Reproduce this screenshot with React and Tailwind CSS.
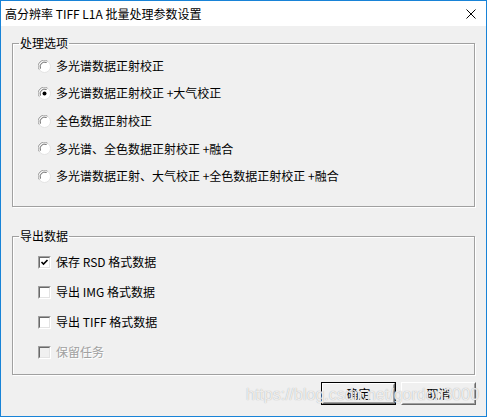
import React from 'react';

const font = { fontFamily: '"Noto Sans CJK SC", "Noto Sans", sans-serif' };

function Radio({ checked }) {
  return (
    <svg width="13" height="13" viewBox="0 0 13 13" className="shrink-0">
      <circle cx="6.5" cy="6.5" r="6" fill="#fff" stroke="#e3e3e3" />
      <path d="M1.2 9.5 A6 6 0 0 1 9.5 1.2" fill="none" stroke="#a0a0a0" strokeWidth="1" />
      <path d="M2.5 8.6 A4.6 4.6 0 0 1 8.6 2.5" fill="none" stroke="#696969" strokeWidth="1" />
      {checked && <circle cx="6.5" cy="6.5" r="2" fill="#000" />}
    </svg>
  );
}

function Checkbox({ checked, disabled }) {
  return (
    <div className="w-[13px] h-[13px] shrink-0 border border-t-[#a0a0a0] border-l-[#a0a0a0] border-r-white border-b-white">
      <div className={`w-full h-full border border-t-[#696969] border-l-[#696969] border-r-[#e3e3e3] border-b-[#e3e3e3] ${disabled ? 'bg-[#f0f0f0]' : 'bg-white'}`}>
        {checked && (
          <svg width="9" height="9" viewBox="0 0 9 9" className="block">
            <path d="M1.5 4 L3.5 6 L7.5 2" fill="none" stroke="#000" strokeWidth="1.6" />
          </svg>
        )}
      </div>
    </div>
  );
}

function Button({ children, isDefault }) {
  return (
    <div className={`w-[75px] h-[23px] ${isDefault ? 'border border-[#000]' : ''}`}>
      <div className="w-full h-full border border-t-white border-l-white border-r-[#696969] border-b-[#696969] bg-[#f0f0f0]">
        <div className="w-full h-full border border-transparent border-r-[#a0a0a0] border-b-[#a0a0a0] flex items-center justify-center text-[12px] text-black">
          {children}
        </div>
      </div>
    </div>
  );
}

export default function App() {
  const radios = [
    { label: '多光谱数据正射校正', checked: false, h: 'h-[26px]' },
    { label: '多光谱数据正射校正 +大气校正', checked: true, h: 'h-[28px]' },
    { label: '全色数据正射校正', checked: false, h: 'h-[28px]' },
    { label: '多光谱、全色数据正射校正 +融合', checked: false, h: 'h-[27px]' },
    { label: '多光谱数据正射、大气校正 +全色数据正射校正 +融合', checked: false, h: 'h-[28px]' },
  ];

  const checks = [
    { label: '保存 RSD 格式数据', checked: true },
    { label: '导出 IMG 格式数据', checked: false },
    { label: '导出 TIFF 格式数据', checked: false },
    { label: '保留任务', checked: false, disabled: true },
  ];

  return (
    <div className="relative w-[487px] h-[417px] border border-[#1883d7] bg-[#f0f0f0] flex flex-col text-black" style={font}>
      {/* 标题栏 */}
      <div className="h-[25px] bg-white flex items-center justify-between pl-[4px] pr-[10px] text-[12px] shrink-0">
        <span>高分辨率 TIFF L1A 批量处理参数设置</span>
        <svg width="10" height="10" viewBox="0 0 10 10">
          <path d="M0.5 0.5 L9.5 9.5 M9.5 0.5 L0.5 9.5" stroke="#000" strokeWidth="1" />
        </svg>
      </div>

      <div className="flex flex-col px-[11px] pt-[9px]">
        {/* 处理选项 */}
        <fieldset className="h-[172px] border border-[#a0a0a0] shadow-[1px_1px_0_#fff,inset_1px_1px_0_#fff] pl-[6px] pt-[2px]">
          <legend className="px-[1px] text-[12px] leading-[16px]">处理选项</legend>
          <div className="flex flex-col pl-[19px]">
            {radios.map((r) => (
              <div key={r.label} className={`${r.h} flex items-center gap-[5px] text-[12px]`}>
                <Radio checked={r.checked} />
                <span>{r.label}</span>
              </div>
            ))}
          </div>
        </fieldset>

        {/* 导出数据 */}
        <fieldset className="mt-[21px] h-[147px] border border-[#a0a0a0] shadow-[1px_1px_0_#fff,inset_1px_1px_0_#fff] pl-[6px] pt-[3px]">
          <legend className="px-[1px] text-[12px] leading-[16px]">导出数据</legend>
          <div className="flex flex-col pl-[19px]">
            {checks.map((c) => (
              <div key={c.label} className="h-[30px] flex items-center gap-[5px] text-[12px]">
                <Checkbox checked={c.checked} disabled={c.disabled} />
                <span className={c.disabled ? 'text-[#a0a0a0] [text-shadow:1px_1px_0_#fff]' : ''}>{c.label}</span>
              </div>
            ))}
          </div>
        </fieldset>

        <div className="flex justify-end gap-[5px] mt-[7px] -mr-[1px]">
          <Button isDefault>确定</Button>
          <Button>取消</Button>
        </div>
      </div>

      {/* 水印 */}
      <div
        className="absolute left-[245px] top-[382px] text-[16px] text-white/80 [text-shadow:0_0_1px_#9a9a9a] pointer-events-none"
        style={{ fontFamily: '"Liberation Sans", Arial, sans-serif' }}
      >
        https://blog.csdn.net/gordon3000
      </div>
    </div>
  );
}
